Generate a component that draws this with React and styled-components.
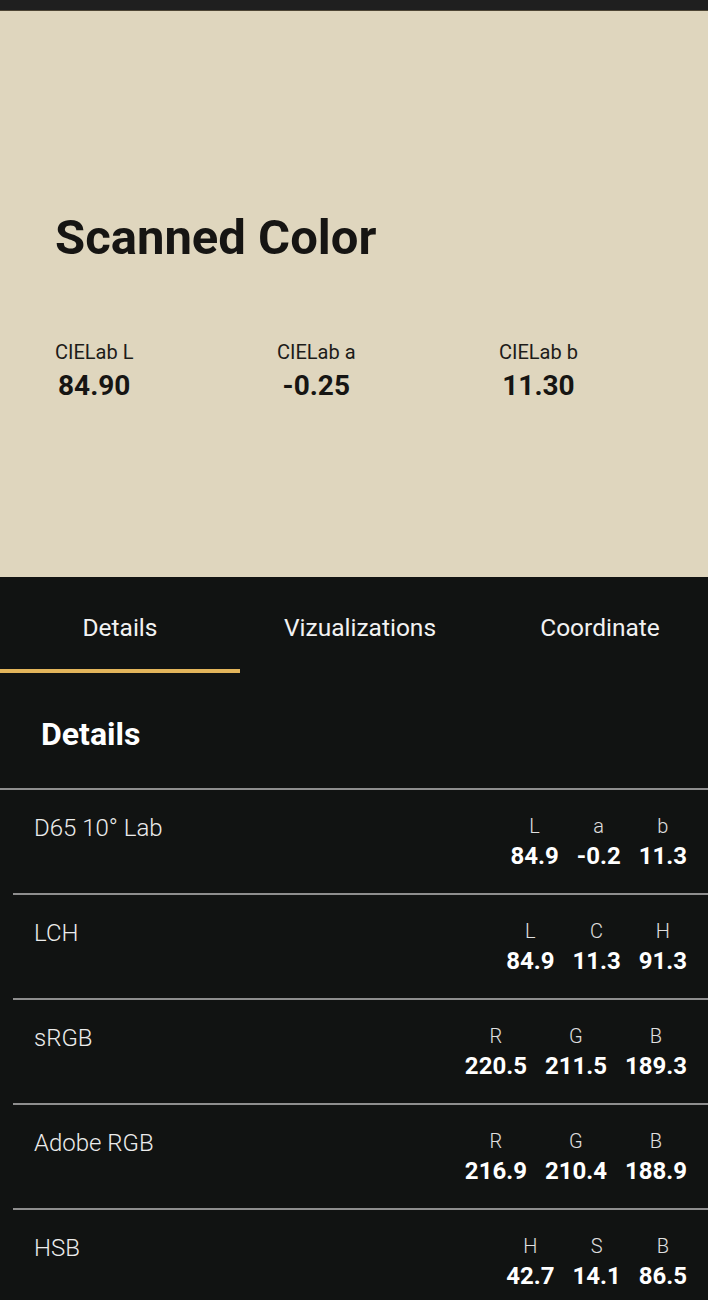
import React from "react";
import styled, { createGlobalStyle } from "styled-components";

const GlobalStyle = createGlobalStyle`
  html, body {
    margin: 0;
    padding: 0;
    background: #111312;
    font-family: Roboto, "Noto Sans", "Liberation Sans", sans-serif;
  }
`;

const scanned = [
  { label: "CIELab L", value: "84.90" },
  { label: "CIELab a", value: "-0.25" },
  { label: "CIELab b", value: "11.30" },
];

const tabs = ["Details", "Vizualizations", "Coordinate"];

const rows = [
  { name: "D65 10° Lab", keys: ["L", "a", "b"], values: ["84.9", "-0.2", "11.3"] },
  { name: "LCH", keys: ["L", "C", "H"], values: ["84.9", "11.3", "91.3"] },
  { name: "sRGB", keys: ["R", "G", "B"], values: ["220.5", "211.5", "189.3"] },
  { name: "Adobe RGB", keys: ["R", "G", "B"], values: ["216.9", "210.4", "188.9"] },
  { name: "HSB", keys: ["H", "S", "B"], values: ["42.7", "14.1", "86.5"] },
];

const App = () => {
  const activeTab = 0;

  return (
    <Page>
      <GlobalStyle />
      <StatusBar />

      <Swatch>
        <Title>Scanned Color</Title>
        <LabGrid>
          {scanned.map((item) => (
            <LabCell key={item.label}>
              <LabLabel>{item.label}</LabLabel>
              <LabValue>{item.value}</LabValue>
            </LabCell>
          ))}
        </LabGrid>
      </Swatch>

      <TabBar>
        {tabs.map((tab, i) => (
          <Tab key={tab} $active={i === activeTab}>
            {tab}
          </Tab>
        ))}
      </TabBar>

      <SectionTitle>Details</SectionTitle>

      <List>
        {rows.map((row, i) => (
          <Row key={row.name} $first={i === 0}>
            <RowName>{row.name}</RowName>
            <Values>
              {row.keys.map((k, j) => (
                <ValueCol key={k + j}>
                  <ValueKey>{k}</ValueKey>
                  <ValueNum>{row.values[j]}</ValueNum>
                </ValueCol>
              ))}
            </Values>
          </Row>
        ))}
      </List>
    </Page>
  );
};

// ---------- styled ----------

const Page = styled.div`
  width: 708px;
  overflow: hidden;
  background: #111312;
`;

const StatusBar = styled.div`
  height: 10px;
  background: #1f1f1f;
  border-bottom: 1px solid #4d4534;
`;

const Swatch = styled.div`
  background: #dfd6be;
  padding: 197px 0 174px 55px;
`;

const Title = styled.h1`
  margin: 0;
  font-size: 49px;
  line-height: 60px;
  font-weight: 700;
  color: #161513;
`;

const LabGrid = styled.div`
  display: grid;
  grid-template-columns: repeat(3, 222px);
  justify-items: start;
  margin-top: 72px;
`;

const LabCell = styled.div`
  display: flex;
  flex-direction: column;
  align-items: center;
  gap: 5px;
`;

const LabLabel = styled.span`
  font-size: 20px;
  line-height: 24px;
  color: #1d1c19;
`;

const LabValue = styled.span`
  font-size: 28px;
  line-height: 34px;
  font-weight: 700;
  color: #161513;
`;

const TabBar = styled.div`
  display: flex;
  height: 96px;
`;

const Tab = styled.div`
  flex: 0 0 240px;
  box-sizing: border-box;
  display: flex;
  align-items: center;
  justify-content: center;
  padding-top: 8px;
  font-size: 24.5px;
  color: #f2f2f2;
  border-bottom: 4px solid ${(p) => (p.$active ? "#e3b55b" : "transparent")};
`;

const SectionTitle = styled.h2`
  margin: 0;
  padding: 42px 0 35px 41px;
  font-size: 32px;
  line-height: 38px;
  font-weight: 700;
  color: #ffffff;
`;

const List = styled.div`
  display: flex;
  flex-direction: column;
`;

const Row = styled.div`
  display: flex;
  align-items: flex-start;
  justify-content: space-between;
  margin-left: ${(p) => (p.$first ? "0" : "13px")};
  padding: 22px 21px 19px ${(p) => (p.$first ? "34px" : "21px")};
  border-top: 2px solid #8e8e8e;
`;

const RowName = styled.span`
  font-size: 24px;
  line-height: 32px;
  font-weight: 300;
  color: #ececec;
`;

const Values = styled.div`
  display: flex;
  gap: 18px;
  padding-top: 2px;
`;

const ValueCol = styled.div`
  display: flex;
  flex-direction: column;
  align-items: center;
`;

const ValueKey = styled.span`
  font-size: 20px;
  line-height: 24px;
  font-weight: 300;
  color: #e0e0e0;
`;

const ValueNum = styled.span`
  font-size: 24px;
  line-height: 36px;
  font-weight: 700;
  color: #ffffff;
`;

export default App;
